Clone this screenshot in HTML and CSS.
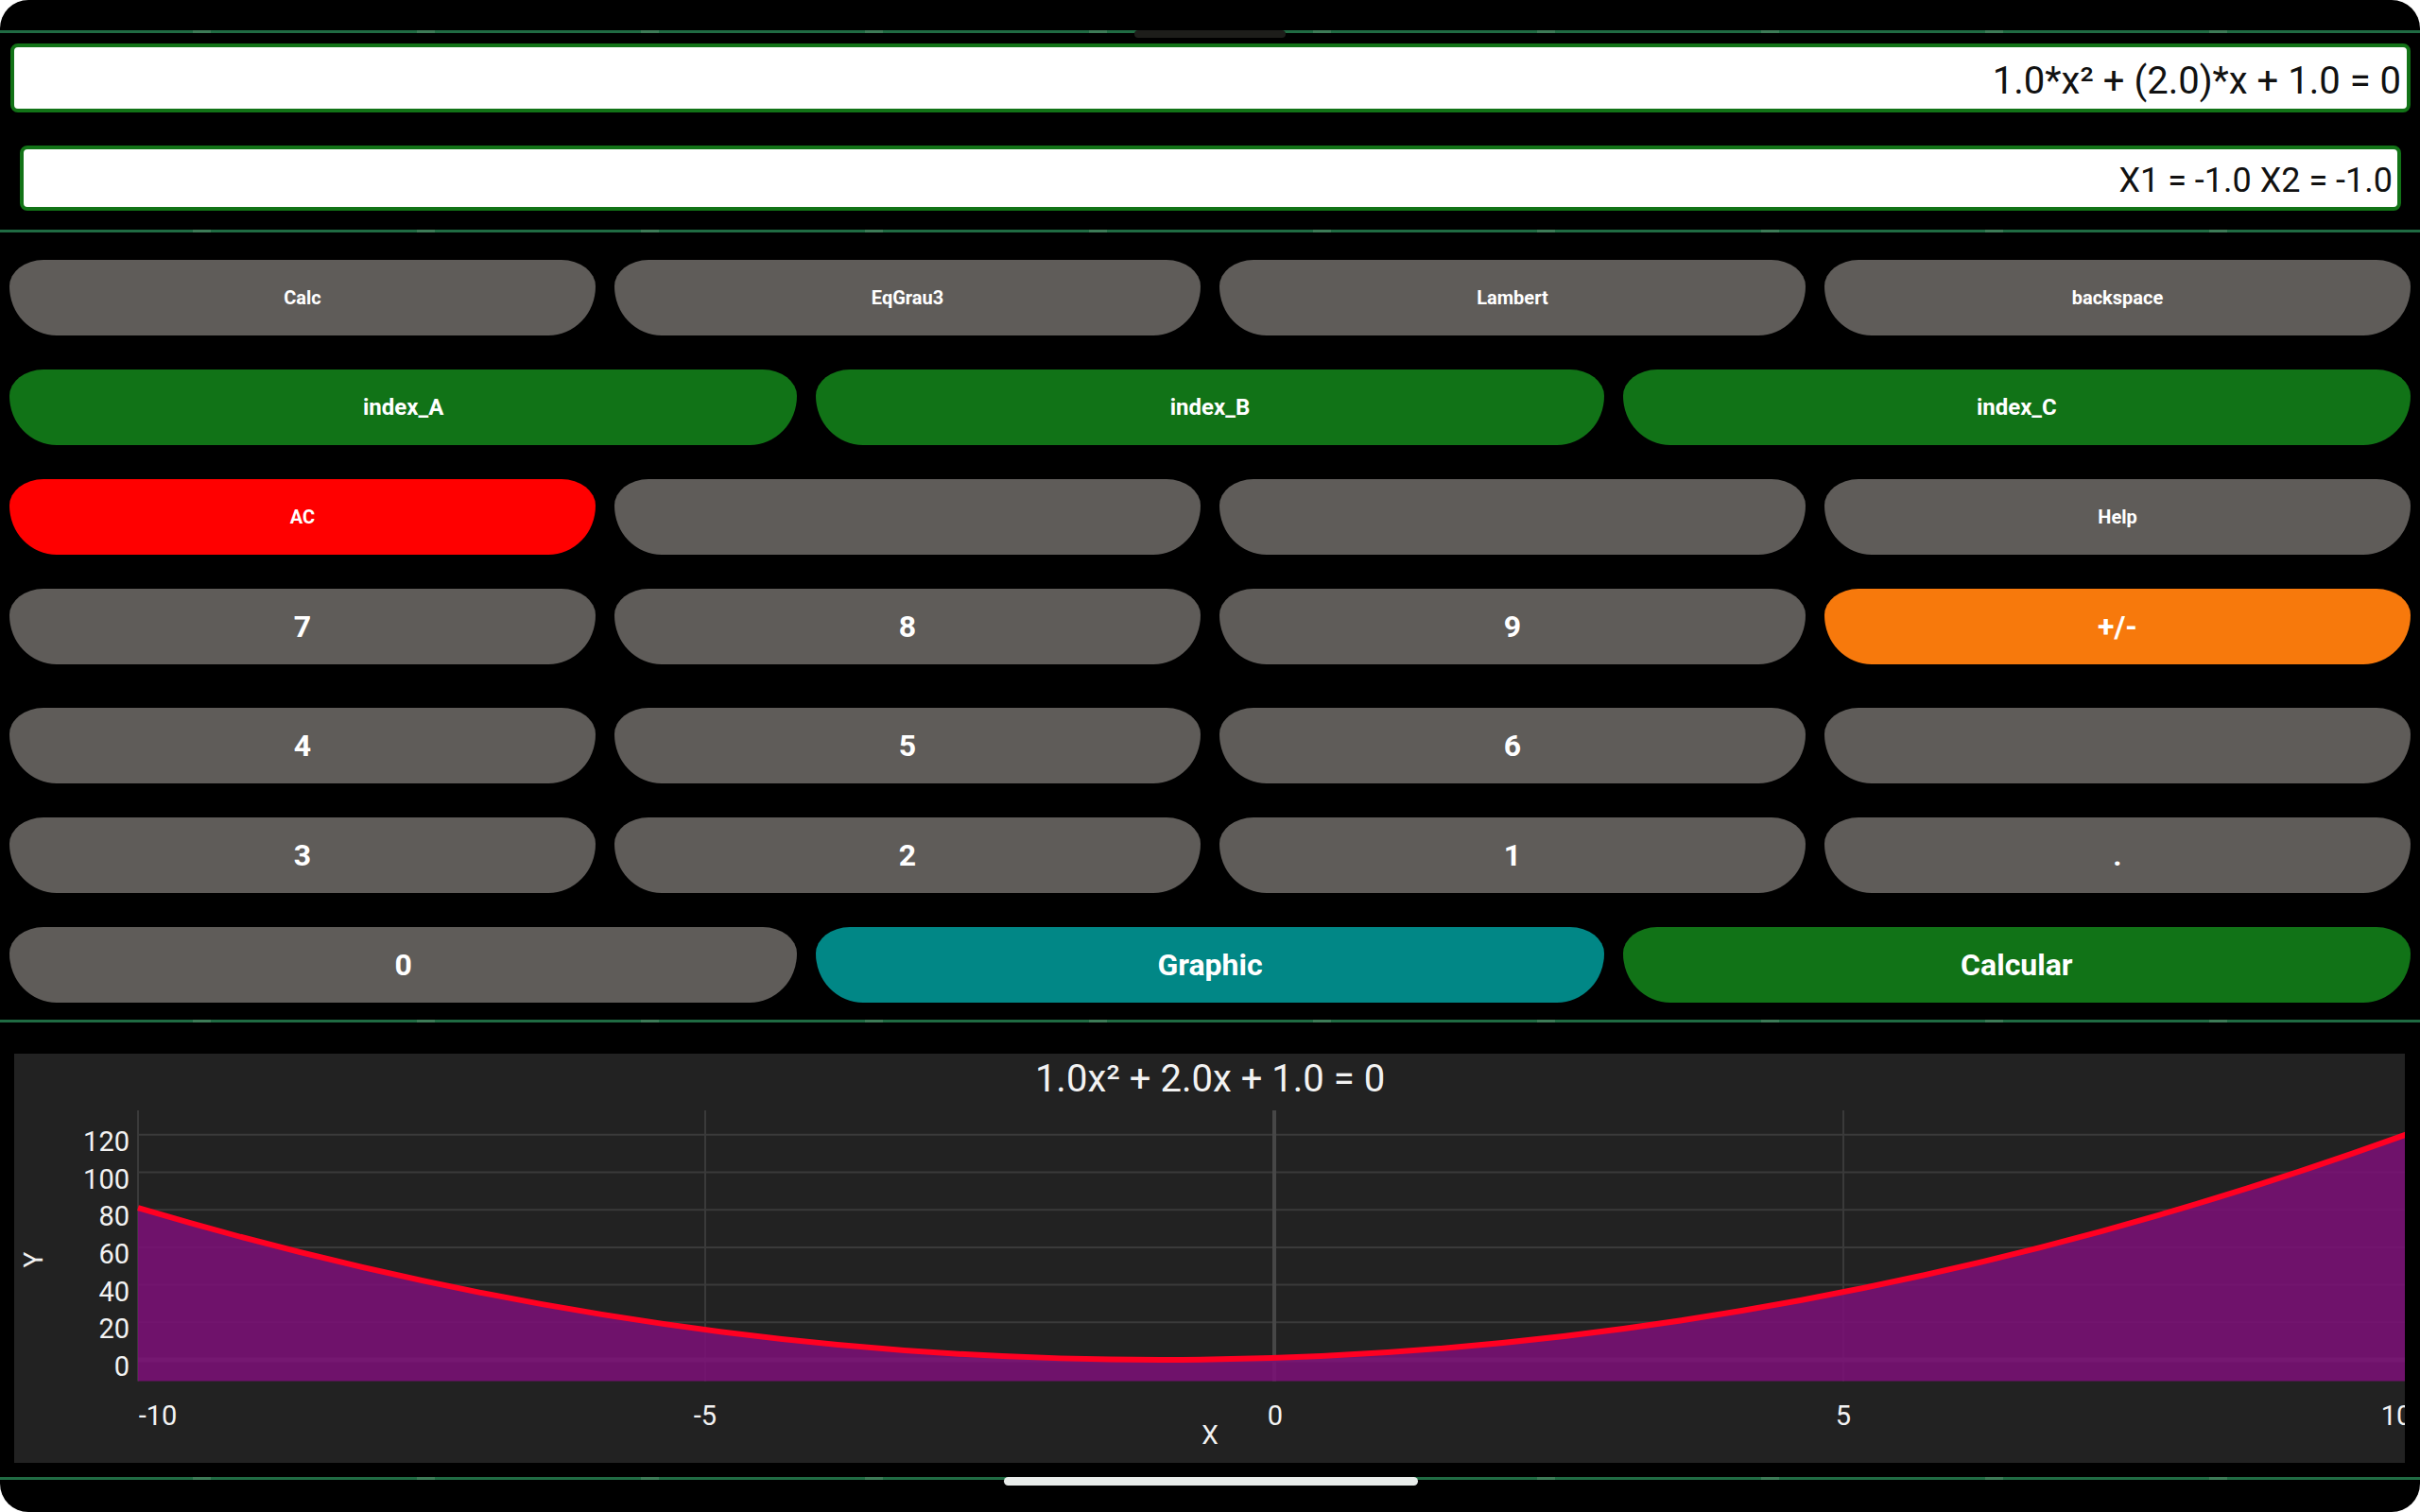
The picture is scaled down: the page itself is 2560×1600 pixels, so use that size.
FILE: index.html
```html
<!DOCTYPE html>
<html lang="pt">
<head>
    <meta charset="UTF-8">
    <meta name="viewport" content="width=device-width, initial-scale=1.0">
    <title>Calculadora - Equação do 2º grau</title>
    <link rel="stylesheet" href="styles.css">
</head>
<body>
    <div class="screen">
        <div class="status"></div>
        <div class="line"></div>

        <div class="display">
            <div class="field main">1.0*x² + (2.0)*x + 1.0 = 0</div>
            <div class="field result">X1 = -1.0 X2 = -1.0</div>
        </div>

        <div class="line"></div>

        <div class="keypad">
            <div class="row four">
                <button class="key small">Calc</button>
                <button class="key small">EqGrau3</button>
                <button class="key small">Lambert</button>
                <button class="key small">backspace</button>
            </div>
            <div class="row three">
                <button class="key green medium">index_A</button>
                <button class="key green medium">index_B</button>
                <button class="key green medium">index_C</button>
            </div>
            <div class="row four">
                <button class="key red small">AC</button>
                <button class="key small"></button>
                <button class="key small"></button>
                <button class="key small">Help</button>
            </div>
            <div class="row four">
                <button class="key">7</button>
                <button class="key">8</button>
                <button class="key">9</button>
                <button class="key orange">+/-</button>
            </div>
            <div class="row four spaced">
                <button class="key">4</button>
                <button class="key">5</button>
                <button class="key">6</button>
                <button class="key"></button>
            </div>
            <div class="row four">
                <button class="key">3</button>
                <button class="key">2</button>
                <button class="key">1</button>
                <button class="key">.</button>
            </div>
            <div class="row three">
                <button class="key">0</button>
                <button class="key teal">Graphic</button>
                <button class="key green">Calcular</button>
            </div>
        </div>

        <div class="line"></div>

        <div class="chart-wrap">
            <div class="chart">
                <svg width="2529" height="433" viewBox="0 0 2529 433">
                    <!-- grid -->
                    <g stroke="#3a3a3a" stroke-width="2">
                        <line x1="131" y1="284.3" x2="2529" y2="284.3"/>
                        <line x1="131" y1="244.6" x2="2529" y2="244.6"/>
                        <line x1="131" y1="204.9" x2="2529" y2="204.9"/>
                        <line x1="131" y1="165.2" x2="2529" y2="165.2"/>
                        <line x1="131" y1="125.5" x2="2529" y2="125.5"/>
                        <line x1="131" y1="85.8" x2="2529" y2="85.8"/>
                        <line x1="131" y1="60" x2="131" y2="346.5"/>
                        <line x1="731" y1="60" x2="731" y2="346.5"/>
                        <line x1="1935" y1="60" x2="1935" y2="346.5"/>
                    </g>
                    <line x1="1333" y1="60" x2="1333" y2="346.5" stroke="#474747" stroke-width="4"/>
                    <line x1="131" y1="324" x2="2529" y2="324" stroke="#4a4a4a" stroke-width="5"/>

                    <!-- y = x² + 2x + 1 -->
                    <path d="M131,163.2 Q1333,520.5 2535,83.8 L2535,346.5 L131,346.5 Z" fill="#7c0f78" fill-opacity="0.85"/>
                    <path d="M131,163.2 Q1333,520.5 2535,83.8" fill="none" stroke="#ff0022" stroke-width="6"/>

                    <text class="title" x="1265" y="40" text-anchor="middle">1.0x² + 2.0x + 1.0 = 0</text>

                    <g class="tick" text-anchor="end">
                        <text x="122" y="103">120</text>
                        <text x="122" y="142.5">100</text>
                        <text x="122" y="182">80</text>
                        <text x="122" y="222">60</text>
                        <text x="122" y="261.5">40</text>
                        <text x="122" y="301">20</text>
                        <text x="122" y="341">0</text>
                    </g>
                    <g class="tick" text-anchor="middle">
                        <text x="152" y="393">-10</text>
                        <text x="731" y="393">-5</text>
                        <text x="1334" y="393">0</text>
                        <text x="1935" y="393">5</text>
                        <text x="2520" y="393">10</text>
                    </g>

                    <text class="axis" x="1265" y="413" text-anchor="middle">X</text>
                    <text class="axis" transform="translate(30,218) rotate(-90)" text-anchor="middle">Y</text>
                </svg>
            </div>
        </div>

        <div class="line"></div>

        <div class="notch"></div>
        <div class="home-bar"></div>
    </div>
</body>
</html>
```

FILE: styles.css
```css
* {
    box-sizing: border-box;
}
body {
    margin: 0;
    padding: 0;
    background-color: #ffffff;
    font-family: Roboto, "Liberation Sans", Arial, sans-serif;
}
.screen {
    position: relative;
    width: 2560px;
    height: 1600px;
    background-color: #000000;
    border-radius: 30px;
    overflow: hidden;
    display: flex;
    flex-direction: column;
}
.status {
    height: 32px;
    flex-shrink: 0;
}
.line {
    height: 3px;
    flex-shrink: 0;
    background: repeating-linear-gradient(90deg, #206b43 0 204px, #3d7b57 204px 223px, #206b43 223px 237px);
}

/* display fields */
.display {
    padding: 11px 0 20px 0;
}
.field {
    display: flex;
    align-items: center;
    justify-content: flex-end;
    background-color: #ffffff;
    border: 4px solid #127317;
    border-radius: 8px;
    color: #111111;
    white-space: nowrap;
}
.field.main {
    height: 73px;
    margin: 0 10px 0 11px;
    padding: 5px 6px 0 0;
    font-size: 40px;
}
.field.result {
    height: 69px;
    margin: 35px 20px 0 21px;
    padding: 5px 5px 0 0;
    font-size: 36px;
}

/* keypad */
.keypad {
    display: flex;
    flex-direction: column;
    gap: 36px;
    padding: 29px 10px 18px 10px;
}
.row {
    display: grid;
    gap: 20px;
}
.row.four {
    grid-template-columns: repeat(4, 1fr);
}
.row.three {
    grid-template-columns: repeat(3, 1fr);
}
.row.spaced {
    margin-top: 10px;
}
.key {
    height: 80px;
    padding: 0;
    border: none;
    border-radius: 36px 36px 50px 50px / 28px 28px 52px 52px;
    background-color: #5f5c59;
    color: #ffffff;
    font-family: Roboto, "Liberation Sans", Arial, sans-serif;
    font-weight: bold;
    font-size: 32px;
    cursor: pointer;
}
.key.small {
    font-size: 20px;
}
.key.medium {
    font-size: 24px;
}
.key.green {
    background-color: #117317;
}
.key.red {
    background-color: #ff0000;
}
.key.orange {
    background-color: #f7790c;
}
.key.teal {
    background-color: #018786;
}

/* graph */
.chart-wrap {
    padding: 33px 16px 15px 15px;
}
.chart {
    height: 433px;
    background-color: #222222;
    overflow: hidden;
}
.chart svg {
    display: block;
}
.chart text {
    font-family: Roboto, "Liberation Sans", Arial, sans-serif;
    fill: #f2f2f2;
}
.chart .title {
    font-size: 40px;
}
.chart .tick text {
    font-size: 29px;
}
.chart .axis {
    font-size: 28px;
}

/* overlays */
.notch {
    position: absolute;
    left: 1200px;
    top: 32px;
    width: 160px;
    height: 8px;
    border-radius: 5px;
    background-color: #1d1d1a;
}
.home-bar {
    position: absolute;
    left: 1062px;
    top: 1563px;
    width: 438px;
    height: 9px;
    border-radius: 5px;
    background-color: #e8ecea;
}
```
